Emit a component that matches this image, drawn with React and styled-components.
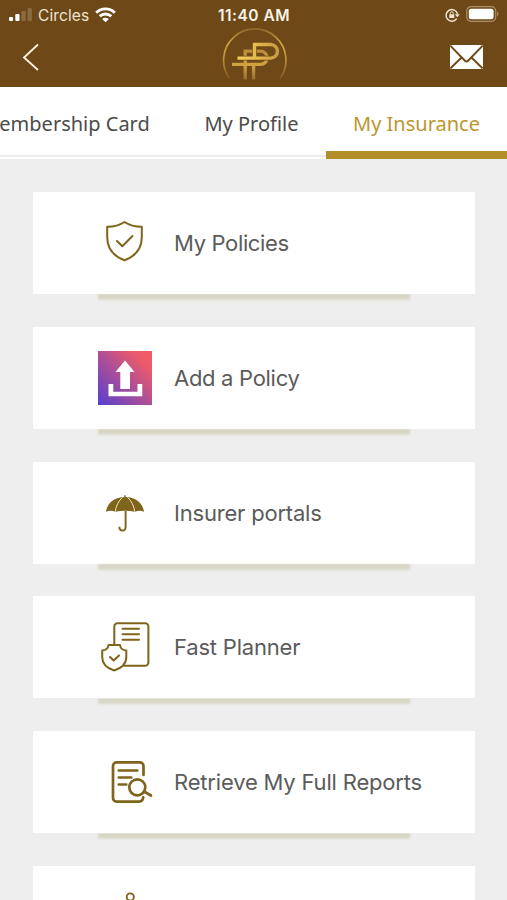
import React from 'react';
import styled, { createGlobalStyle } from 'styled-components';

const GlobalStyle = createGlobalStyle`
  * {
    box-sizing: border-box;
  }
  body {
    margin: 0;
    background: #eeeeee;
    overflow: hidden;
  }
`;

const Screen = styled.div`
  width: 507px;
  height: 900px;
  overflow: hidden;
  background: #eeeeee;
  font-family: Inter, 'Liberation Sans', sans-serif;
`;

const Header = styled.header`
  height: 87px;
  background: #6e4917;
  color: #fff;
`;

const StatusBar = styled.div`
  display: grid;
  grid-template-columns: 1fr auto 1fr;
  align-items: center;
  height: 28px;
  padding: 2px 8px 0 9px;
`;

const StatusGroup = styled.div`
  display: flex;
  align-items: center;
  justify-content: ${props => (props.$end ? 'flex-end' : 'flex-start')};
  gap: 6px;
`;

const Carrier = styled.span`
  font-size: 15.5px;
  letter-spacing: 0.1px;
  color: #f0e4d3;
`;

const Clock = styled.span`
  font-size: 15.5px;
  font-weight: 600;
  letter-spacing: 0.5px;
  color: #fbf3e8;
`;

const NavBar = styled.div`
  display: grid;
  grid-template-columns: 1fr auto 1fr;
  height: 59px;
  padding: 0 24px 0 22px;
`;

const NavButton = styled.button`
  display: flex;
  height: 58px;
  padding: 0;
  align-items: center;
  justify-self: ${props => (props.$end ? 'end' : 'start')};
  border: none;
  background: none;
`;

const Icon = styled.svg`
  display: block;
  flex: none;
  fill: none;
  overflow: visible;
`;

const Tabs = styled.nav`
  display: flex;
  justify-content: flex-end;
  height: 72px;
  background: #fff;
`;

const Tab = styled.div`
  position: relative;
  flex: none;
  width: ${props => props.$width}px;
  height: 72px;
  padding-top: 23px;
  text-align: center;
  white-space: nowrap;
  font-family: 'Noto Sans', 'Open Sans', sans-serif;
  font-size: 20px;
  line-height: 28px;
  color: ${props => (props.$active ? '#bd962f' : '#4b4b4b')};

  &::after {
    content: '';
    position: absolute;
    left: 0;
    right: 0;
    bottom: ${props => (props.$active ? 0 : 2)}px;
    height: ${props => (props.$active ? 8 : 2)}px;
    background: ${props => (props.$active ? '#b38f2b' : '#ececec')};
  }
`;

const List = styled.main`
  display: flex;
  flex-direction: column;
  gap: 32.8px;
  padding: 33px 32px 0 33px;
`;

const Card = styled.div`
  position: relative;
  display: flex;
  flex: none;
  align-items: center;
  gap: 22px;
  height: 102px;
  padding-left: 65px;
  background: #fff;
  border-radius: 1px;

  /* short shadow strip under the card */
  &::after {
    content: '';
    position: absolute;
    left: 65px;
    right: 65px;
    top: 100%;
    height: 6px;
    background: linear-gradient(#d3d0bb, #dedccf);
    filter: blur(1px);
    clip-path: inset(0 -4px -4px -4px);
  }
`;

const Label = styled.span`
  font-size: 22px;
  line-height: 30px;
  letter-spacing: ${props => props.$spacing}px;
  white-space: nowrap;
  color: #5b5b5b;
`;

const GOLD = '#7f651b';

const Signal = () => (
  <Icon width="23" height="14" viewBox="0 0 23 14">
    <rect x="0" y="9" width="4" height="4" rx="1" fill="#fff" />
    <rect x="6.3" y="6" width="4.2" height="7" rx="1" fill="#fff" />
    <rect x="12.5" y="3" width="4.2" height="10" rx="1" fill="#8b6c42" />
    <rect x="18.6" y="0" width="4.2" height="13" rx="1" fill="#8b6c42" />
  </Icon>
);

const Wifi = () => (
  <Icon width="21" height="16" viewBox="0 0 21 16" stroke="#fff" strokeWidth="2.8">
    <path d="M1.2 5.7C6.5.6 14.5.6 19.8 5.7" />
    <path d="M4.7 9.3c3.3-3.1 8.300-3.1 11.600 0" />
    <path d="M7.2 12c1.900-1.700 4.700-1.700 6.600 0l-3.300 3.300z" fill="#fff" stroke="none" />
  </Icon>
);

const RotationLock = () => (
  <Icon width="15" height="14" viewBox="0 0 15 14" stroke="#f0e3d0">
    <path d="M11.7 10.6A5.8 5.8 0 1 1 12.5 6" strokeWidth="1.5" />
    <path d="M9.8 6.3h5l-2.500 3z" fill="#f0e3d0" stroke="none" />
    <rect x="4.3" y="6.3" width="5" height="3.8" rx=".6" fill="#f0e3d0" stroke="none" />
    <path d="M5.3 6.5V5.3a1.5 1.5 0 0 1 3 0v1.200" strokeWidth="1" />
  </Icon>
);

const Battery = () => (
  <Icon width="33" height="16" viewBox="0 0 33 16">
    <g transform="translate(0 -1)">
      <rect x=".7" y=".7" width="29" height="14.6" rx="4.3" stroke="#a98e68" strokeWidth="1.2" />
      <rect x="2.8" y="2.8" width="24.8" height="10.4" rx="2.5" fill="#fff" />
      <path d="M31.2 5.7c1.700.7 1.700 3.900 0 4.600z" fill="#a98e68" />
    </g>
  </Icon>
);

const Back = () => (
  <Icon width="18" height="28" viewBox="0 0 18 28">
    <path d="M16 1.500L2 14.500l14 12.500" stroke="#fff4e2" strokeWidth="1.8" />
  </Icon>
);

const Mail = () => (
  <Icon width="33" height="24" viewBox="0 0 33 24">
    <rect width="33" height="24" rx="1.5" fill="#fff" />
    <path d="M.5.8l14.200 14.700q1.800 1.800 3.600 0L32.500.8M.5 23.200l11.300-11M32.500 23.200l-11.300-11" stroke="#6e4917" strokeWidth="1.9" />
  </Icon>
);

const Logo = () => (
  <Icon width="64" height="54" viewBox="0 0 64 54">
    <defs>
      <linearGradient id="ring" x1="0" y1="0" x2="0" y2="54" gradientUnits="userSpaceOnUse">
        <stop offset="0" stopColor="#8c6428" />
        <stop offset=".3" stopColor="#d3a844" />
        <stop offset=".6" stopColor="#b78d35" />
        <stop offset="1" stopColor="#74501d" />
      </linearGradient>
      <linearGradient id="front" x1="16" y1="0" x2="58" y2="0" gradientUnits="userSpaceOnUse">
        <stop offset="0" stopColor="#f0cf58" />
        <stop offset=".5" stopColor="#e2b94a" />
        <stop offset="1" stopColor="#c49a40" />
      </linearGradient>
      <linearGradient id="rear" x1="0" y1="22" x2="0" y2="52" gradientUnits="userSpaceOnUse">
        <stop offset="0" stopColor="#b98b3a" />
        <stop offset=".5" stopColor="#d0a443" />
        <stop offset="1" stopColor="#936b2c" />
      </linearGradient>
    </defs>
    <path d="M8.700 50.700A31.200 31.200 0 1 1 58.900 50.700" stroke="url(#ring)" strokeWidth="1.7" />
    <path d="M24.200 51.500V23.200h15.300a6.600 6.600 0 0 1 0 13.200H11M32.600 36.400v15.100" stroke="url(#rear)" strokeWidth="3.3" />
    <path d="M33.500 30V16.500h16.200a6.800 6.800 0 0 1 0 13.600H16.500" stroke="#6e4917" strokeWidth="4.600" />
    <path d="M33.500 30V16.500h16.200a6.800 6.800 0 0 1 0 13.600H16.500" stroke="url(#front)" strokeWidth="3.400" />
  </Icon>
);

const iconProps = { width: 54, height: 54, viewBox: '0 0 54 54', stroke: GOLD };

const ShieldIcon = () => (
  <Icon {...iconProps} strokeWidth="2" strokeLinejoin="round" strokeLinecap="round">
    <path d="M26.500 6Q19 10.900 9.200 10.800V21C9.200 32.500 15.500 40.200 26.500 44.300 37.500 40.200 43.800 32.500 43.800 21V10.800Q34 10.900 26.500 6z" />
    <path d="M19 25l5.300 5.200L34.500 20" />
  </Icon>
);

const UploadIcon = () => (
  <Icon width="54" height="54" viewBox="0 0 54 54">
    <defs>
      <linearGradient id="upload" x1="0" y1="1" x2="1" y2="0">
        <stop offset="0" stopColor="#5640cf" />
        <stop offset=".5" stopColor="#b04f95" />
        <stop offset=".8" stopColor="#e95a6c" />
        <stop offset="1" stopColor="#f65c62" />
      </linearGradient>
    </defs>
    <rect width="54" height="54" fill="url(#upload)" />
    <path d="M27 9.500L36.500 21H32v17H22.300V21h-4.800z" fill="#fff" />
    <path d="M10.500 33h4.800v7.800h24.200V33h4.800v12.300H10.500z" fill="#fff" />
  </Icon>
);

const UmbrellaIcon = () => (
  <Icon {...iconProps}>
    <path d="M8 25.700C9.500 16 17 11.200 26.300 10.900V9.200h1.400v1.700C37 11.200 44.500 16 46 25.700q-4.500-1.800-9 0-9.800-2-19.800 0-4.700-1.800-9.200 0z" fill={GOLD} stroke="none" />
    <path d="M24.500 11.300q-6 5.500-7.300 14.400M29.500 11.300q6 5.500 7.300 14.400" stroke="#f3e6b8" strokeWidth="1" />
    <path d="M27.600 25v16.500c0 4.200-6.300 4.200-6.300-.8" strokeWidth="1.9" />
  </Icon>
);

const PlannerIcon = () => (
  <Icon {...iconProps} strokeWidth="2" strokeLinejoin="round" strokeLinecap="round">
    <path d="M16.300 24V6.500a3.200 3.200 0 0 1 3.200-3.200h27.700a3.200 3.200 0 0 1 3.200 3.200v36a3.200 3.200 0 0 1-3.200 3.200H26" />
    <path d="M24.500 8.700H41M24.500 14.200H41M24.500 19.700H41" />
    <path d="M10.500 25H22c.4 3.300 2.200 5.200 6.300 5.600V37c0 6.500-4.500 11-12.200 13.500C8.400 48 4.200 43.500 4.200 37v-6.400c4-.4 5.900-2.300 6.300-5.600z" />
    <path d="M12 37l3.700 3.500 5.300-5" />
  </Icon>
);

const ReportIcon = () => (
  <Icon {...iconProps} strokeWidth="2.700" strokeLinecap="round">
    <path d="M45.500 20V11a3.600 3.600 0 0 0-3.600-3.600H18.600A3.600 3.600 0 0 0 15 11v32a3.600 3.600 0 0 0 3.600 3.600H41q3.800-.2 4.200-4.200" />
    <path d="M20.800 15.500h18.500M20.800 22.500h12.500M20.800 29.500h7.500" />
    <circle cx="39.300" cy="32.300" r="8" />
    <path d="M46 36.500l7 4" />
  </Icon>
);

const PersonIcon = () => (
  <Icon {...iconProps} strokeWidth="1.900">
    <circle cx="32.300" cy="7" r="3.600" />
    <path d="M24 31v-9q0-8 8.300-8t8.300 8v9" />
  </Icon>
);

const items = [
  { label: 'My Policies', icon: ShieldIcon, spacing: -0.35 },
  { label: 'Add a Policy', icon: UploadIcon, spacing: -0.3 },
  { label: 'Insurer portals', icon: UmbrellaIcon, spacing: -0.2 },
  { label: 'Fast Planner', icon: PlannerIcon, spacing: -0.2 },
  { label: 'Retrieve My Full Reports', icon: ReportIcon, spacing: -0.18 },
  { label: '', icon: PersonIcon, spacing: 0 },
];

export default function App() {
  return (
    <>
      <GlobalStyle />
      <Screen>
        <Header>
          <StatusBar>
            <StatusGroup>
              <Signal />
              <Carrier>Circles</Carrier>
              <Wifi />
            </StatusGroup>
            <Clock>11:40 AM</Clock>
            <StatusGroup $end>
              <RotationLock />
              <Battery />
            </StatusGroup>
          </StatusBar>
          <NavBar>
            <NavButton aria-label="Back">
              <Back />
            </NavButton>
            <Logo />
            <NavButton $end aria-label="Messages">
              <Mail />
            </NavButton>
          </NavBar>
        </Header>
        <Tabs>
          <Tab $width={223}>Membership Card</Tab>
          <Tab $width={149}>My Profile</Tab>
          <Tab $width={181} $active>My Insurance</Tab>
        </Tabs>
        <List>
          {items.map(({ label, icon: ItemIcon, spacing }) => (
            <Card key={label}>
              <ItemIcon />
              <Label $spacing={spacing}>{label}</Label>
            </Card>
          ))}
        </List>
      </Screen>
    </>
  );
}
